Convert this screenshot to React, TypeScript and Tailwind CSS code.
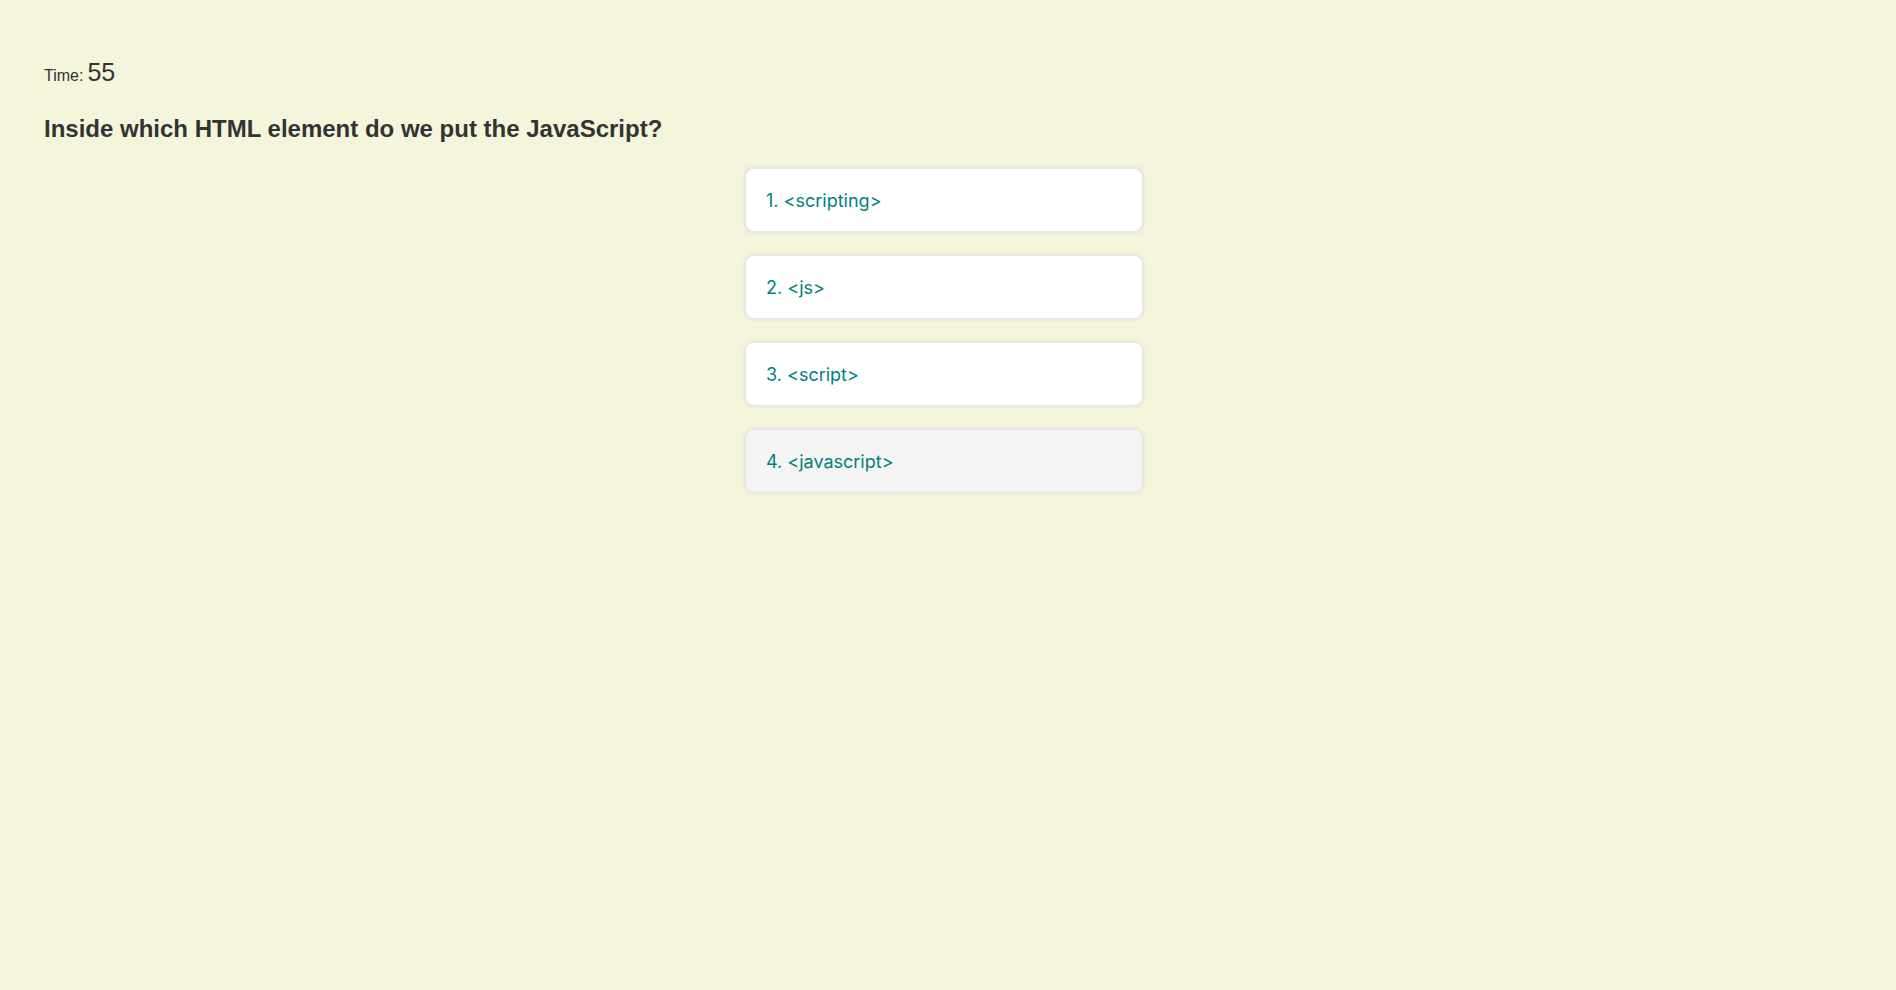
const options = ['<scripting>', '<js>', '<script>', '<javascript>']

export default function App() {
  return (
    <div className="min-h-screen bg-[#f5f5dc] pl-[44px] pr-[52px] pt-[60px] font-['Liberation_Sans',Arial,sans-serif] text-[#333]">
      <div className="flex items-baseline gap-1 leading-none">
        <span className="text-[16px]">Time:</span>
        <span className="text-[25px]">55</span>
      </div>
      <h2 className="mt-[32px] text-[24px] font-bold leading-none">Inside which HTML element do we put the JavaScript?</h2>
      <ul className="mt-[26px] flex flex-col items-center gap-[21px]">
        {options.map((opt, i) => (
          <li
            key={opt}
            className={
              'flex h-[66px] w-[400px] items-center rounded-[10px] border-2 border-[#e8e8e8] px-5 font-[Inter,sans-serif] text-[18px] text-[#008080] shadow-[0_0_4px_rgba(0,0,0,0.06)] ' +
              (i === 3 ? 'bg-[#f4f4f4]' : 'bg-white')
            }
          >
            {i + 1}. {opt}
          </li>
        ))}
      </ul>
    </div>
  )
}
